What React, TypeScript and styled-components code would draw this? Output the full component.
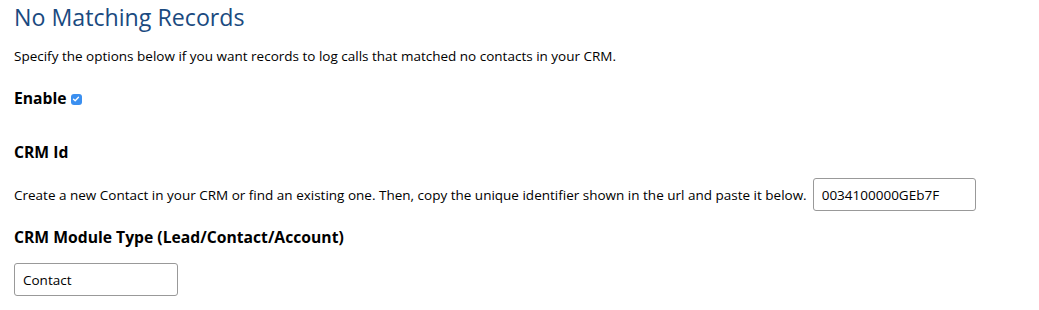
import styled, { createGlobalStyle } from 'styled-components';

const GlobalStyle = createGlobalStyle`
    body {
        margin: 0;
        background: #fff;
        font-family: "Open Sans", "Liberation Sans", sans-serif;
        color: #000;
    }
`

const Page = styled.div`
    padding: 0 14px;
`

const Title = styled.h2`
    margin: 0;
    padding-top: 2px;
    font-size: 23.2px;
    font-weight: 400;
    line-height: 30px;
    color: #1a4a80;
`

const Text = styled.p`
    margin: 14px 0 0;
    font-size: 13.5px;
    line-height: 20px;
`

const Heading = styled.h4<{ $top: number }>`
    margin: ${p => p.$top}px 0 0;
    font-size: 15.7px;
    font-weight: 700;
    line-height: 22px;
    display: flex;
    align-items: center;
    gap: 4px;
`

const Check = styled.span`
    display: inline-flex;
    align-items: center;
    justify-content: center;
    width: 11px;
    height: 11px;
    border-radius: 3px;
    background: #3a8ff0;
    margin-top: 2px;
`

const Row = styled.div`
    margin-top: 15px;
    display: flex;
    align-items: center;
    gap: 6px;
    font-size: 13.5px;
`

const Input = styled.input<{ $width: number }>`
    box-sizing: border-box;
    width: ${p => p.$width}px;
    height: 33px;
    padding: 0 8px;
    border: 1px solid #999;
    border-radius: 3px;
    font-family: inherit;
    font-size: 13.5px;
    color: #000;
    background: #fff;
`

const Field = styled.div`
    margin-top: 15px;
`

const App = () => {
    return (
        <>
            <GlobalStyle />
            <Page>
                <Title>No Matching Records</Title>
                <Text>Specify the options below if you want records to log calls that matched no contacts in your CRM.</Text>
                <Heading $top={21}>
                    Enable
                    <Check>
                        <svg width="8" height="8" viewBox="0 0 8 8">
                            <path d="M1.5 4.2 L3.2 5.8 L6.5 2.2" fill="none" stroke="#fff" strokeWidth="1.3" strokeLinecap="round" strokeLinejoin="round" />
                        </svg>
                    </Check>
                </Heading>
                <Heading $top={32}>CRM Id</Heading>
                <Row>
                    <span>Create a new Contact in your CRM or find an existing one. Then, copy the unique identifier shown in the url and paste it below.</span>
                    <Input $width={163} defaultValue="0034100000GEb7F" />
                </Row>
                <Heading $top={15}>CRM Module Type (Lead/Contact/Account)</Heading>
                <Field>
                    <Input $width={164} defaultValue="Contact" />
                </Field>
            </Page>
        </>
    )
}

export default App
